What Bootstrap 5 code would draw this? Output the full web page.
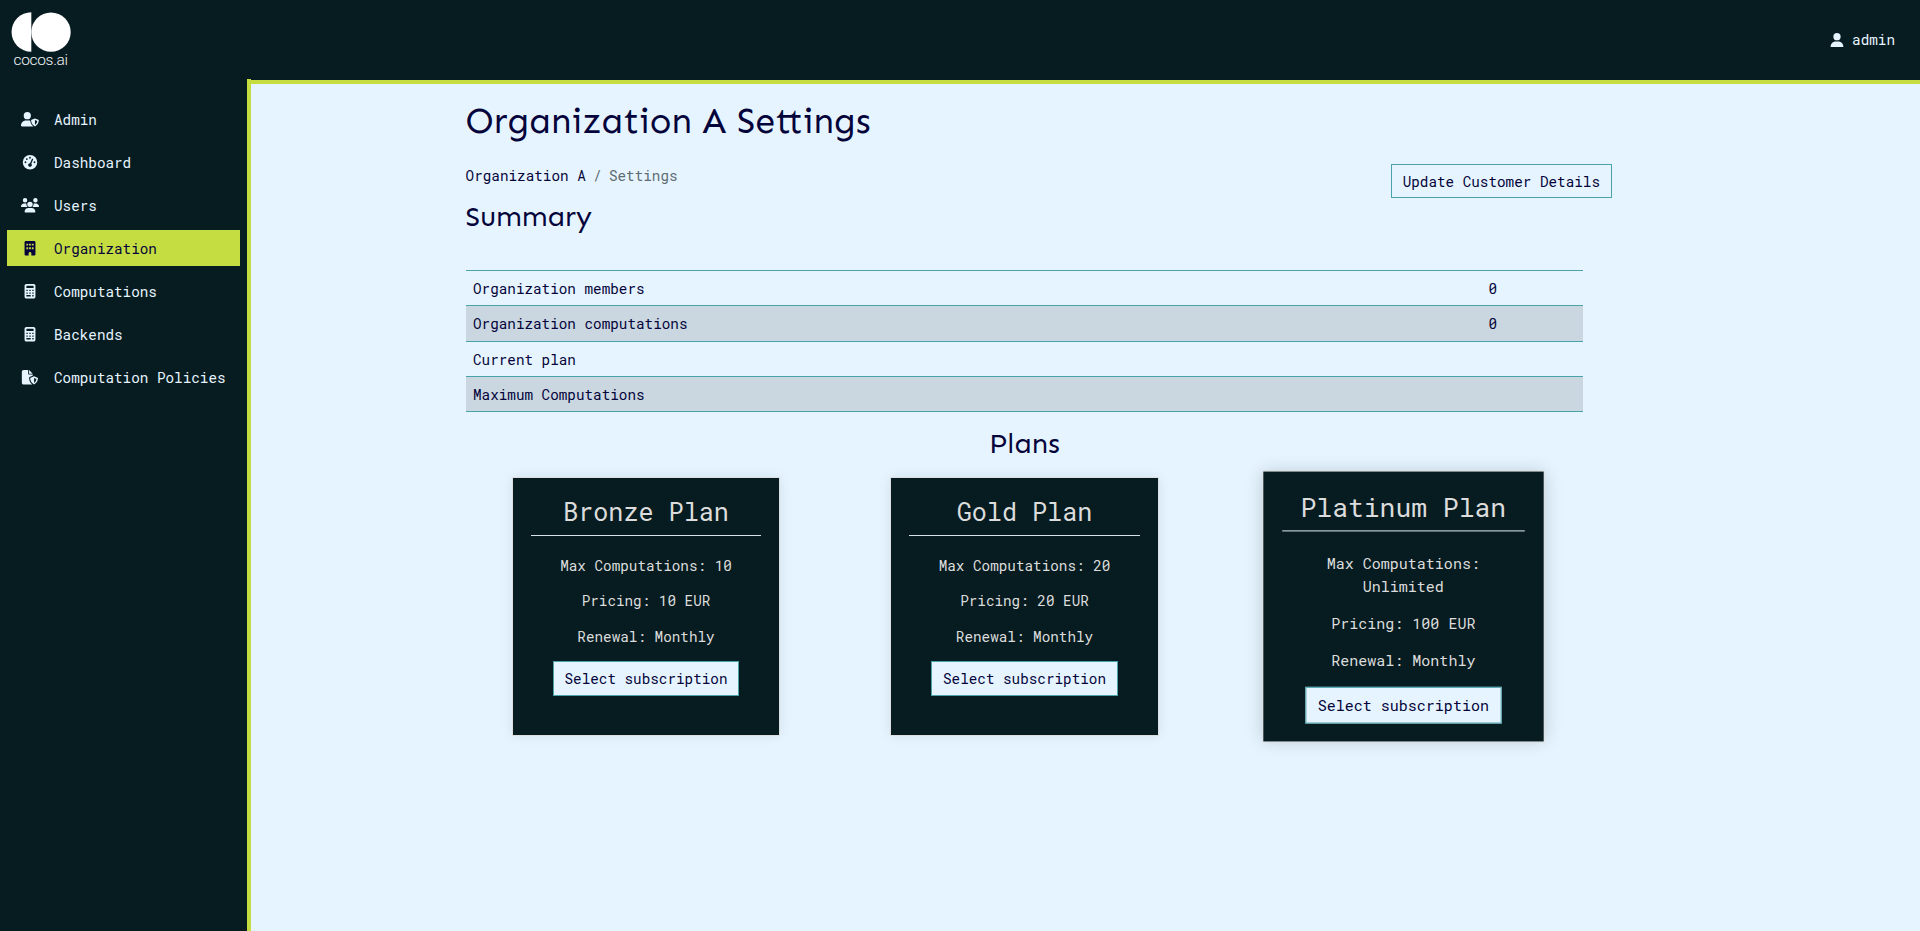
<!DOCTYPE html>
<html lang="en">
<head>
<meta charset="utf-8">
<title>Organization A Settings</title>
<link href="https://cdn.jsdelivr.net/npm/bootstrap@5.3.0/dist/css/bootstrap.min.css" rel="stylesheet">
<style>
:root{--night:#071c21;--lime:#c6dd42;--sky:#e6f4ff;--navy:#04043b;--teal:#4aa2ab}
body{font-family:"Roboto Mono","Liberation Mono",monospace;font-size:14.31px;line-height:21.33px;background:var(--sky);color:var(--navy);overflow:hidden}
.topbar{height:80px;background:var(--night);color:var(--sky);padding-right:25px}
.brand-logo{width:90px;height:80px}
.shell{height:851px}
.side{width:251px;height:852px;margin-top:-1px;padding:22px 7px 0;background:var(--night);border-right:4px solid var(--lime)}
.side .nav-link{height:36px;margin-bottom:7px;padding:1px 0 0 14.3px;color:var(--sky)}
.side .nav-link.active{background:var(--lime);color:var(--navy)}
.ico{width:18px;height:14.5px;fill:currentColor}
.side .ico{margin-right:14.7px}
.user-name{margin-left:6px}
.content-area{border-top:4px solid var(--lime);padding:15px 0 0 214.6px}
.heading{font-family:Sen,Lato,sans-serif;font-weight:400;margin:0}
.h-main{font-size:35.8px;line-height:43px}
.h-sub{font-size:28.6px;line-height:34px}
.tools{width:1146.4px;height:36px;margin-top:22px}
.breadcrumb-item+.breadcrumb-item::before{color:#5f6c70}
.breadcrumb{--bs-breadcrumb-item-padding-x:7.3px;padding-top:1px}
.breadcrumb .active{color:#5f6c70}
.btn-outline{--bs-btn-padding-x:11px;--bs-btn-font-size:14.31px;--bs-btn-line-height:21.33px;--bs-btn-border-radius:0;--bs-btn-color:var(--navy);--bs-btn-bg:var(--sky);--bs-btn-border-color:var(--teal);padding-top:6px;padding-bottom:5px}
.summary{width:1117px;margin:36px 0 15px;border-top:1px solid var(--teal);--bs-table-color:var(--navy);--bs-table-bg:transparent;border-color:var(--teal)}
.summary tr:nth-child(even) td{background:#cad7e0}
.summary td{padding:8px 7px 6px 7.4px;height:35.25px;line-height:20px}
.summary td:last-child{width:180px;text-align:center}
.plans{width:1135.5px;margin-left:-8.85px}
.plans .h-sub{margin-bottom:17px}
.plan{width:266.7px;height:257px;border:0;border-radius:0;background:var(--night);color:#dcdcdc;padding:19px 18px 0;box-shadow:0 0 0 1px #dcdfe0,0 0 12px rgba(8,28,33,.1)}
.plan .h3{font-size:25.1px;line-height:30px;font-weight:400;padding-bottom:7.5px;margin-bottom:19.5px;border-bottom:1px solid #d5e2ea}
.plan p{margin-bottom:14.1px}
.plan .btn{--bs-btn-padding-x:10.7px;padding-bottom:5.6px}
.plan-top{transform:scale(1.05);box-shadow:0 0 0 1px #dcdfe0,0 0 16px rgba(8,28,33,.2)}
.plan-top .h3{padding-bottom:7px;margin-bottom:20.3px}
</style>
<script src="https://cdn.jsdelivr.net/npm/bootstrap@5.3.0/dist/js/bootstrap.bundle.min.js"></script>
</head>
<body>
<header class="topbar d-flex justify-content-between align-items-center">
  <svg class="brand-logo" viewBox="0 0 90 80"><path fill="#fff" d="M31.3 12.3v39.5a19.75 19.75 0 0 1 0-39.5z"/><circle cx="51" cy="32.1" r="19.7" fill="#fff"/><text x="13.5" y="65" font-family="Roboto" font-weight="300" font-size="15.5" fill="#f0f4f4" textLength="54.5">cocos.ai</text></svg>
  <div class="d-flex align-items-center"><svg class="ico" viewBox="0 0 448 512"><path d="M224 256A128 128 0 1 0 224 0a128 128 0 1 0 0 256zm-45.700 48C79.800 304 0 383.800 0 482.300C0 498.700 13.300 512 29.700 512H418.300c16.400 0 29.700-13.300 29.700-29.700C448 383.800 368.200 304 269.700 304H178.300z"/></svg><span class="user-name">admin</span></div>
</header>
<div class="shell d-flex">
  <nav class="side nav flex-column flex-nowrap flex-shrink-0">
    <a class="nav-link d-flex align-items-center"><svg class="ico" viewBox="0 0 640 512"><path fill-rule="evenodd" d="M224 256A128 128 0 1 0 224 0a128 128 0 1 0 0 256zm-46 48C80 304 0 384 0 482c0 17 13 30 30 30h388c10 0 14-2 18-6-76-58-104-146-106-198-18-3-38-4-60-4zM496 225l-120 48c-10 4-16 13-16 22 0 50 21 155 125 212 7 4 15 4 22 0 104-57 125-162 125-212 0-10-6-18-16-22zm0 60v170c60-40 79-104 80-141z"/></svg>Admin</a>
    <a class="nav-link d-flex align-items-center"><svg class="ico" viewBox="0 0 512 512"><path fill-rule="evenodd" d="M0 256a256 256 0 1 1 512 0A256 256 0 1 1 0 256zM288 96a32 32 0 1 0-64 0 32 32 0 1 0 64 0zM256 416c35.300 0 64-28.700 64-64c0-17.400-6.900-33.100-18.100-44.600L366 161.700c5.300-12.100-.2-26.300-12.300-31.600s-26.300 .2-31.600 12.300L257.900 288h-1.900c-35.300 0-64 28.700-64 64s28.700 64 64 64zM176 144a32 32 0 1 0-64 0 32 32 0 1 0 64 0zM96 288a32 32 0 1 0 0-64 32 32 0 1 0 0 64zm352-32a32 32 0 1 0-64 0 32 32 0 1 0 64 0z"/></svg>Dashboard</a>
    <a class="nav-link d-flex align-items-center"><svg class="ico" viewBox="0 0 640 512"><path d="M144 0a80 80 0 1 1 0 160A80 80 0 1 1 144 0zM512 0a80 80 0 1 1 0 160A80 80 0 1 1 512 0zM0 298.700C0 239.800 47.800 192 106.700 192h42.700c15.900 0 31 3.500 44.600 9.700c-1.300 7.200-1.900 14.700-1.900 22.300c0 38.200 16.800 72.500 43.300 96H21.300C9.600 320 0 310.400 0 298.700zM405.300 320h-.7c26.600-23.500 43.300-57.800 43.300-96c0-7.600-.7-15-1.900-22.300c13.600-6.300 28.700-9.700 44.600-9.700h42.700C592.200 192 640 239.800 640 298.700c0 11.800-9.600 21.300-21.300 21.300H405.300zM224 224a96 96 0 1 1 192 0 96 96 0 1 1-192 0zM128 485.300C128 411.700 187.700 352 261.300 352H378.700C452.300 352 512 411.700 512 485.300c0 14.700-11.900 26.700-26.700 26.700H154.700c-14.700 0-26.700-11.900-26.700-26.700z"/></svg>Users</a>
    <a class="nav-link active d-flex align-items-center"><svg class="ico" viewBox="0 0 384 512"><path fill-rule="evenodd" d="M48 0C21.500 0 0 21.500 0 48V464c0 26.500 21.500 48 48 48h96V432c0-26.500 21.500-48 48-48s48 21.500 48 48v80h96c26.500 0 48-21.500 48-48V48c0-26.500-21.500-48-48-48zM64 96h64v64H64zm96 0h64v64h-64zm96 0h64v64h-64zM64 224h64v64H64zm96 0h64v64h-64zm96 0h64v64h-64z"/></svg>Organization</a>
    <a class="nav-link d-flex align-items-center"><svg class="ico" viewBox="0 0 384 512"><path fill-rule="evenodd" d="M64 0C29 0 0 29 0 64v384c0 35 29 64 64 64h256c35 0 64-29 64-64V64c0-35-29-64-64-64zM80 64h224q16 0 16 16v48q0 16-16 16H80q-16 0-16-16V80q0-16 16-16zM64 200h48v48H64zm104 0h48v48h-48zm104 0h48v48h-48zM64 296h48v48H64zm104 0h48v48h-48zm104 0h48v48h-48zM64 392h152v48H64zm208 0h48v48h-48z"/></svg>Computations</a>
    <a class="nav-link d-flex align-items-center"><svg class="ico" viewBox="0 0 384 512"><path fill-rule="evenodd" d="M64 0C29 0 0 29 0 64v384c0 35 29 64 64 64h256c35 0 64-29 64-64V64c0-35-29-64-64-64zM80 64h224q16 0 16 16v48q0 16-16 16H80q-16 0-16-16V80q0-16 16-16zM64 200h48v48H64zm104 0h48v48h-48zm104 0h48v48h-48zM64 296h48v48H64zm104 0h48v48h-48zm104 0h48v48h-48zM64 392h152v48H64zm208 0h48v48h-48z"/></svg>Backends</a>
    <a class="nav-link d-flex align-items-center"><svg class="ico" viewBox="0 0 576 512"><path fill-rule="evenodd" d="M0 64C0 29 29 0 64 0h160v128c0 18 14 32 32 32h128v39l-99 39c-18 7-29 25-29 43 0 67 25 165 111 229-2 2-30 2-47 2H64c-35 0-64-29-64-64zM384 128H256V0zM432 225l-120 48c-10 4-16 13-16 22 0 50 21 155 125 212 7 4 15 4 22 0 104-57 125-162 125-212 0-10-6-18-16-22zm0 60v170c60-40 79-104 80-141z"/></svg>Computation Policies</a>
  </nav>
  <main class="content-area flex-grow-1">
    <h1 class="heading h-main">Organization A Settings</h1>
    <div class="tools d-flex justify-content-between align-items-start">
      <div>
        <ol class="breadcrumb mb-0"><li class="breadcrumb-item">Organization A</li><li class="breadcrumb-item active">Settings</li></ol>
      </div>
      <button class="btn btn-outline">Update Customer Details</button>
    </div>
    <h2 class="heading h-sub">Summary</h2>
    <table class="table summary">
      <tbody>
        <tr><td>Organization members</td><td>0</td></tr>
        <tr><td>Organization computations</td><td>0</td></tr>
        <tr><td>Current plan</td><td></td></tr>
        <tr><td>Maximum Computations</td><td></td></tr>
      </tbody>
    </table>
    <section class="plans">
      <h2 class="heading h-sub text-center">Plans</h2>
      <div class="row g-0 text-center">
        <div class="col-4 d-flex justify-content-center"><div class="card plan"><div class="h3">Bronze Plan</div><p>Max Computations: 10</p><p>Pricing: 10 EUR</p><p>Renewal: Monthly</p><div><button class="btn btn-outline">Select subscription</button></div></div></div>
        <div class="col-4 d-flex justify-content-center"><div class="card plan"><div class="h3">Gold Plan</div><p>Max Computations: 20</p><p>Pricing: 20 EUR</p><p>Renewal: Monthly</p><div><button class="btn btn-outline">Select subscription</button></div></div></div>
        <div class="col-4 d-flex justify-content-center"><div class="card plan plan-top"><div class="h3">Platinum Plan</div><p>Max Computations:<br>Unlimited</p><p>Pricing: 100 EUR</p><p>Renewal: Monthly</p><div><button class="btn btn-outline">Select subscription</button></div></div></div>
      </div>
    </section>
  </main>
</div>
</body>
</html>
